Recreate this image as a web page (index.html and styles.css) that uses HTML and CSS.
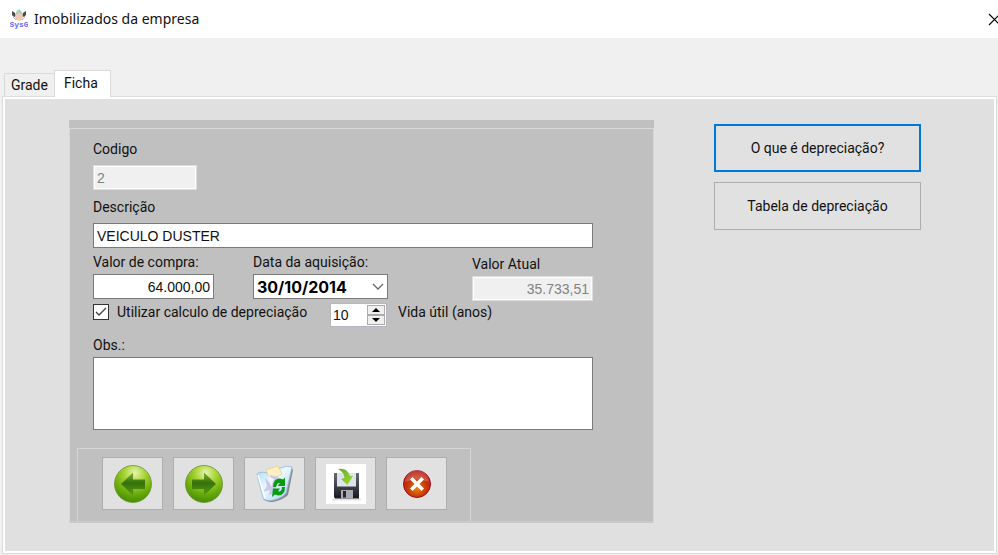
FILE: index.html
```html
<!DOCTYPE html>
<html lang="pt-BR">
<head>
    <meta charset="UTF-8">
    <meta name="viewport" content="width=device-width, initial-scale=1.0">
    <title>Imobilizados da empresa</title>
    <link rel="stylesheet" href="styles.css">
</head>
<body>
    <header class="title-bar">
        <svg class="app-icon" width="18" height="20" viewBox="0 0 18 20">
            <path d="M2 2 L5 4 L6 7 L4 8 L2 6 Z M16 2 L13 4 L12 7 L14 8 L16 6 Z" fill="#4a4a4a"/>
            <path d="M6 3 L9 0 L12 3 L13 6 L5 6 Z" fill="#a9d3bb"/>
            <ellipse cx="9" cy="8" rx="4" ry="3.500" fill="#f0c8b4"/>
            <path d="M3 8 L6 11 M15 8 L12 11" stroke="#c4bab6" stroke-width="1"/>
            <text x="9" y="18" text-anchor="middle" class="app-icon-text">SysG</text>
        </svg>
        <h1>Imobilizados da empresa</h1>
        <button type="button" class="close-button" aria-label="Fechar">
            <svg width="13" height="13" viewBox="0 0 13 13"><path d="M1 1 L12 12 M12 1 L1 12" stroke="#000" stroke-width="1.1"/></svg>
        </button>
    </header>

    <nav class="tabs">
        <button type="button" class="tab">Grade</button>
        <button type="button" class="tab active">Ficha</button>
    </nav>

    <main class="tab-page">
        <form class="record">
            <div class="record-body">
                <div class="fields">
                    <div class="field">
                        <label for="codigo">Codigo</label>
                        <input type="text" id="codigo" class="short" value="2" disabled>
                    </div>
                    <div class="field">
                        <label for="descricao">Descrição</label>
                        <input type="text" id="descricao" value="VEICULO DUSTER">
                    </div>

                    <div class="field-row">
                        <div class="field tight money">
                            <label for="valorCompra">Valor de compra:</label>
                            <input type="text" id="valorCompra" value="64.000,00">
                        </div>
                        <div class="field tight date">
                            <label for="dataAquisicao">Data da aquisição:</label>
                            <div class="date-box">
                                <select id="dataAquisicao">
                                    <option>30/10/2014</option>
                                </select>
                                <svg class="chevron" width="12" height="8" viewBox="0 0 12 8"><path d="M1 1 L6 6 L11 1" fill="none" stroke="#666" stroke-width="1.3"/></svg>
                            </div>
                        </div>
                        <div class="field tight money current">
                            <label for="valorAtual">Valor Atual</label>
                            <input type="text" id="valorAtual" value="35.733,51" disabled>
                        </div>
                    </div>

                    <div class="options-row">
                        <label class="check">
                            <input type="checkbox" checked>
                            <span>Utilizar calculo de depreciação</span>
                        </label>
                        <div class="spinner">
                            <input type="text" id="vidaUtil" value="10">
                            <div class="spinner-buttons">
                                <button type="button" aria-label="Aumentar"><svg width="8" height="4" viewBox="0 0 8 4"><path d="M0 4 L4 0 L8 4 Z"/></svg></button>
                                <button type="button" aria-label="Diminuir"><svg width="8" height="4" viewBox="0 0 8 4"><path d="M0 0 L4 4 L8 0 Z"/></svg></button>
                            </div>
                        </div>
                        <label for="vidaUtil">Vida útil (anos)</label>
                    </div>

                    <div class="field tight">
                        <label for="obs">Obs.:</label>
                        <textarea id="obs"></textarea>
                    </div>
                </div>

                <div class="toolbar">
                    <button type="button" aria-label="Anterior">
                        <svg width="40" height="40" viewBox="0 0 40 40">
                            <defs>
                                <radialGradient id="ball" cx="0.55" cy="0.2" r="0.8">
                                    <stop offset="0" stop-color="#e6f5b0"/>
                                    <stop offset="0.35" stop-color="#a8d436"/>
                                    <stop offset="0.7" stop-color="#6dae0c"/>
                                    <stop offset="1" stop-color="#458c04"/>
                                </radialGradient>
                                <linearGradient id="arrow" x1="0" y1="0" x2="0" y2="1">
                                    <stop offset="0" stop-color="#86b23a"/>
                                    <stop offset="0.45" stop-color="#34720a"/>
                                    <stop offset="1" stop-color="#5a9c14"/>
                                </linearGradient>
                            </defs>
                            <circle cx="20" cy="20" r="18.5" fill="url(#ball)" stroke="#6a9430" stroke-width="0.8"/>
                            <path d="M8 20 L20 8.500 V15.500 H32 V25 H20 V31.500 Z" fill="url(#arrow)"/>
                        </svg>
                    </button>
                    <button type="button" aria-label="Próximo">
                        <svg width="40" height="40" viewBox="0 0 40 40">
                            <circle cx="20" cy="20" r="18.5" fill="url(#ball)" stroke="#6a9430" stroke-width="0.8"/>
                            <path d="M32 20 L20 8.500 V15.500 H8 V25 H20 V31.500 Z" fill="url(#arrow)"/>
                        </svg>
                    </button>
                    <button type="button" aria-label="Excluir">
                        <svg width="40" height="40" viewBox="0 0 40 40">
                            <defs>
                                <linearGradient id="bin" x1="0" y1="0" x2="1" y2="1">
                                    <stop offset="0" stop-color="#a8d8f6"/>
                                    <stop offset="0.45" stop-color="#eef8ff"/>
                                    <stop offset="1" stop-color="#a3c8ec"/>
                                </linearGradient>
                            </defs>
                            <path d="M8 35 Q12 38.500 18 38 Q28 36 33 31 L38 6 L36 3 L31 29 Z" fill="#666" opacity="0.7"/>
                            <path d="M2 10 Q5 7 12 9 L25 4 Q32 1 37 3 L31 29 Q28 34 17 36.500 Q10 37 8 34 Z" fill="url(#bin)" stroke="#85bce3" stroke-width="0.8"/>
                            <path d="M11 6 L23 2 L27 10 L15 16 Z" fill="#fdf0c2" stroke="#eecb78" stroke-width="0.7"/>
                            <path d="M10 14 L15 19 L15 11 L24 13 L20 29 L14 31 L15 26 L8 28 L12 22 Z" fill="#c9c9ea"/>
                            <path d="M13 12 L19 15 L16 23 Z" fill="#f4f4ff"/>
                            <path d="M3 11 L10 34" stroke="#fff" stroke-width="1.5"/>
                            <path d="M18 23 Q18 14.500 25 14.500 L28 15.500 L30 13.500 L30 22 L22.500 22 L25 19 Q22 18.500 21 23 Z" fill="#079b12"/>
                            <path d="M30 23 Q30 31.500 23 31.500 L20 30.500 L17 33 L18 24.500 L25 24.500 L23 27.500 Q27 28 27 23 Z" fill="#079b12"/>
                        </svg>
                    </button>
                    <button type="button" aria-label="Salvar">
                        <svg width="40" height="40" viewBox="0 0 40 40">
                            <defs>
                                <linearGradient id="disk" x1="0" y1="0" x2="0" y2="1">
                                    <stop offset="0" stop-color="#666c76"/>
                                    <stop offset="1" stop-color="#17191e"/>
                                </linearGradient>
                                <linearGradient id="save" x1="0" y1="0" x2="1" y2="1">
                                    <stop offset="0" stop-color="#64a832"/>
                                    <stop offset="1" stop-color="#a0e02a"/>
                                </linearGradient>
                            </defs>
                            <rect width="40" height="40" fill="#fff"/>
                            <path d="M6 35.500 H35" stroke="#e2e2e2" stroke-width="2"/>
                            <path d="M8 9 H33 V34.500 H9 L8 33 Z" fill="url(#disk)"/>
                            <path d="M11 9 H30 V22.500 H11 Z" fill="#dfe3ee"/>
                            <path d="M15 26 H27 V34.500 H15 Z" fill="#a9abb0"/>
                            <path d="M17 27 H20 V33.500 H17 Z" fill="#25272c"/>
                            <path d="M12 5 Q21 3 24 12 L27 12 L21.500 21 L15 15 L18.500 14 Q18 8 12 5 Z" fill="url(#save)"/>
                        </svg>
                    </button>
                    <button type="button" aria-label="Fechar ficha">
                        <svg width="40" height="40" viewBox="0 0 40 40">
                            <defs>
                                <radialGradient id="stop" cx="0.5" cy="0.65" r="0.6">
                                    <stop offset="0" stop-color="#e88a0c"/>
                                    <stop offset="0.5" stop-color="#cc4206"/>
                                    <stop offset="1" stop-color="#b00c0c"/>
                                </radialGradient>
                            </defs>
                            <circle cx="20" cy="20" r="13.500" fill="url(#stop)" stroke="#98100f" stroke-width="1"/>
                            <path d="M8 18 A12 12 0 0 1 32 18 Q20 13 8 18 Z" fill="#fff" opacity="0.22"/>
                            <path d="M15.500 15.500 L24.500 24.500 M24.500 15.500 L15.500 24.500" stroke="#fff" stroke-width="3.500" stroke-linecap="square"/>
                            <circle cx="20" cy="20" r="12.200" fill="none" stroke="#cc3430" stroke-width="0.8"/>
                        </svg>
                    </button>
                </div>
            </div>
        </form>

        <aside class="side-actions">
            <button type="button" class="focused">O que é depreciação?</button>
            <button type="button">Tabela de depreciação</button>
        </aside>
    </main>
</body>
</html>
```
FILE: styles.css
```css
* {
    margin: 0;
    padding: 0;
    box-sizing: border-box;
}

body {
    display: flex;
    flex-direction: column;
    min-height: 100vh;
    background: #f0f0f0;
    color: #111;
    font-family: Roboto, "Liberation Sans", sans-serif;
    font-size: 14px;
    line-height: 18px;
    overflow-x: hidden;
}

button, input, select, textarea {
    font: inherit;
    color: inherit;
    border-radius: 0;
}

svg {
    display: block;
}

.title-bar {
    display: flex;
    align-items: center;
    height: 38px;
    padding-left: 10px;
    background: #fff;
}

.title-bar h1 {
    margin-left: 6px;
    font-family: "Noto Sans", sans-serif;
    font-size: 14px;
    font-weight: normal;
}

.app-icon-text {
    font-family: "Liberation Mono", monospace;
    font-size: 8px;
    font-weight: bold;
    fill: #6a6af0;
}

.close-button {
    width: 10px;
    margin-left: auto;
    border: none;
    background: none;
    overflow: hidden;
}

.tabs {
    display: flex;
    align-items: flex-end;
    margin-top: 32px;
    padding-left: 4px;
}

.tab {
    height: 23px;
    padding: 0 6px;
    border: 1px solid #d9d9d9;
    border-width: 1px 0 0 1px;
    background: #f0f0f0;
}

.tab.active {
    height: 27px;
    padding: 0 12px 2px 9px;
    border-width: 1px 1px 0 1px;
    background: #fff;
    position: relative;
    margin-bottom: -1px;
}

.tab-page {
    flex: 1;
    display: flex;
    align-items: flex-start;
    gap: 60px;
    margin: 0 1px 1px 2px;
    padding: 23px 75px 26px 66px;
    border: 1px solid #dcdcdc;
    background: #e0e0e0;
    box-shadow: inset 0 0 0 2px #fff;
}

.record {
    flex: 0 1 585px;
    padding-top: 8px;
    background: #c0c0c0;
}

.record-body {
    border: 1px solid #d8d8d8;
    border-bottom: 2px solid #cacaca;
}

.fields {
    display: flex;
    flex-direction: column;
    padding: 11px 60px 0 23px;
}

.field {
    display: flex;
    flex-direction: column;
    gap: 7px;
    margin-bottom: 8px;
}

.field.tight {
    gap: 3px;
    margin-bottom: 0;
}

input[type="text"], textarea, .date-box {
    width: 100%;
    height: 25px;
    padding: 0 3px;
    border: 1px solid #7a7a7a;
    background: #fff;
    font-family: "Liberation Sans", sans-serif;
}

input[type="text"]:disabled {
    border-color: #dcdcdc;
    background: #f0f0f0;
    color: #838383;
    box-shadow: inset 0 0 0 1px #fff;
}

input[type="text"].short {
    width: 104px;
}

.field-row {
    display: flex;
    align-items: flex-start;
    gap: 39px;
    margin-top: -3px;
}

.money {
    width: 121px;
}

.money input {
    text-align: right;
}

.date {
    width: 135px;
}

.current {
    margin-left: auto;
    padding-top: 2px;
}

.date-box {
    display: flex;
    align-items: center;
}

.date-box select {
    flex: 1;
    min-width: 0;
    border: none;
    background: none;
    appearance: none;
    font-family: Inter, sans-serif;
    font-size: 16px;
    font-weight: bold;
    color: #000;
}

.options-row {
    display: flex;
    align-items: flex-start;
    margin: 2px 0 9px;
}

.check {
    display: flex;
    align-items: center;
    gap: 8px;
    width: 237px;
}

.check input {
    width: 16px;
    height: 16px;
    border: 1px solid #333;
    appearance: none;
    background: #fff;
}

.check input:checked {
    background: #fff url("data:image/svg+xml,%3Csvg xmlns='http://www.w3.org/2000/svg' viewBox='0 0 14 14'%3E%3Cpath d='M2 7 L5 10 L12 3' fill='none' stroke='%23444' stroke-width='1.4'/%3E%3C/svg%3E");
}

.spinner {
    display: flex;
    width: 57px;
    height: 24px;
    margin-right: 11px;
    padding: 1px;
    border: 1px solid #b4b7bd;
    background: #fff;
}

.spinner input[type="text"] {
    flex: 1;
    min-width: 0;
    height: 100%;
    padding: 0 1px;
    border: none;
}

.spinner-buttons {
    display: flex;
    flex-direction: column;
    width: 18px;
}

.spinner-buttons button {
    flex: 1;
    display: flex;
    align-items: center;
    justify-content: center;
    border: 1px solid #acacac;
    background: #f0f0f0;
}

textarea {
    display: block;
    height: 73px;
    resize: none;
}

.toolbar {
    display: flex;
    gap: 10px;
    width: 394px;
    margin: 18px 0 0 7px;
    padding: 8px 0 11px 24px;
    border: 1px solid #d5d5d5;
    border-bottom: none;
}

.toolbar button, .side-actions button {
    border: 1px solid #adadad;
    background: #e1e1e1;
}

.toolbar button {
    display: flex;
    align-items: center;
    justify-content: center;
    width: 61px;
    height: 53px;
}

.side-actions {
    flex: 1;
    display: flex;
    flex-direction: column;
    gap: 10px;
    padding-top: 4px;
}

.side-actions button {
    height: 48px;
}

.side-actions .focused {
    border: 2px solid #0078d7;
}
```
